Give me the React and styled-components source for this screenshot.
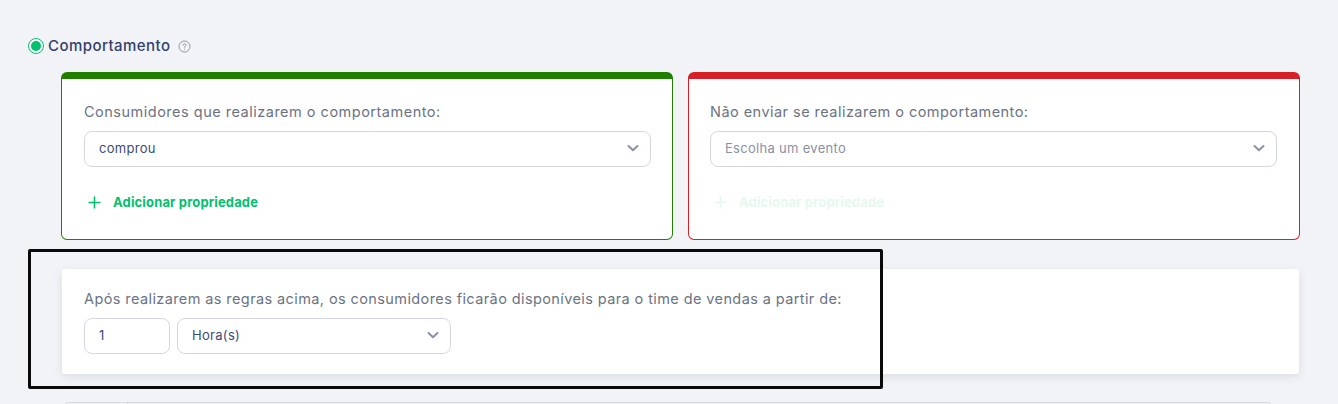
import React from "react";
import styled, { createGlobalStyle } from "styled-components";

const Global = createGlobalStyle`
  html, body { margin: 0; padding: 0; background: #f2f3f7; }
  body { font-family: "Inter", "Liberation Sans", sans-serif; overflow: hidden; }
  * { box-sizing: border-box; }
`;

const Page = styled.div`
  position: relative;
  width: 1338px;
  height: 404px;
  overflow: hidden;
  padding: 38px 38px 0 28px;
  background: #f2f3f7;
`;

const Heading = styled.div`
  display: flex;
  align-items: center;
  height: 16px;
`;

const Radio = styled.span`
  width: 16px;
  height: 16px;
  border-radius: 50%;
  border: 1.5px solid #00c16e;
  background: #fff;
  display: flex;
  align-items: center;
  justify-content: center;
  &::after {
    content: "";
    width: 10px;
    height: 10px;
    border-radius: 50%;
    background: #00c16e;
  }
`;

const Title = styled.span`
  margin-left: 4px;
  font-size: 15px;
  font-weight: 500;
  color: #33416f;
  letter-spacing: 0.45px;
  line-height: 16px;
`;

const Help = styled.svg`
  margin: 1px 0 0 7px;
  width: 13px;
  height: 13px;
`;

const Body = styled.div`
  padding: 18px 0 0 33px;
`;

const Cards = styled.div`
  display: grid;
  grid-template-columns: 612px 612px;
  column-gap: 15px;
`;

const RuleCard = styled.section`
  height: 168px;
  background: #fff;
  border: 1px solid ${(p) => p.$color};
  border-top: 7px solid ${(p) => p.$color};
  border-radius: 6px;
  padding: 23px 0 0 ${(p) => p.$inset}px;
`;

const Label = styled.div`
  font-size: 14.5px;
  line-height: 20px;
  color: #6b7383;
  letter-spacing: ${(p) => p.$spacing};
  margin-bottom: 9px;
`;

const Select = styled.div`
  display: flex;
  align-items: center;
  justify-content: space-between;
  width: ${(p) => p.$width}px;
  height: 36px;
  background: #fff;
  border: 1px solid #d5d7e2;
  border-radius: 8px;
  padding: 0 10px 2px 14px;
  font-size: 13px;
  letter-spacing: 0.3px;
  color: ${(p) => (p.$muted ? "#8b90a4" : "#3d4a78")};
`;

const Chevron = styled.svg`
  width: 14px;
  height: 9px;
  flex: none;
`;

const AddButton = styled.div`
  display: flex;
  align-items: center;
  gap: 12px;
  margin: 27px 0 0 4px;
  font-size: 13px;
  font-weight: 700;
  letter-spacing: 0.15px;
  color: #00c16e;
  opacity: ${(p) => (p.$disabled ? 0.1 : 1)};
`;

const PlusIcon = styled.svg`
  width: 13px;
  height: 13px;
`;

const DelayCard = styled.section`
  width: 1237px;
  height: 105px;
  margin: 29px 0 0 1px;
  background: #fff;
  border-radius: 3px;
  box-shadow: 0 3px 10px rgba(60, 70, 100, 0.12);
  padding: 20px 22px 0;
`;

const DelayRow = styled.div`
  display: flex;
  gap: 7px;
`;

const NumberBox = styled.div`
  width: 86px;
  height: 36px;
  display: flex;
  align-items: center;
  padding: 0 0 2px 14px;
  border: 1px solid #d5d7e2;
  border-radius: 8px;
  font-size: 13px;
  color: #3d4a78;
`;

const NextCard = styled.div`
  width: 1210px;
  height: 30px;
  margin: 28px 0 0 2px;
  background: #f2f3f7;
  border: 1px solid #d5d7e2;
  border-radius: 6px;
  display: grid;
  grid-template-columns: 64px 1fr;
  &::before {
    content: "";
    border-right: 1px solid #d5d7e2;
  }
`;

const Annotation = styled.div`
  position: absolute;
  left: 28px;
  top: 249px;
  width: 855px;
  height: 140px;
  border: 3px solid #0a0a0a;
  border-radius: 2px;
  pointer-events: none;
`;

const ChevronDown = () => (
  <Chevron viewBox="0 0 14 9" fill="none">
    <path d="M2.5 2l4.5 4.2L11.500 2" stroke="#8a90a6" strokeWidth="2" strokeLinecap="round" strokeLinejoin="round" />
  </Chevron>
);

const Plus = () => (
  <PlusIcon viewBox="0 0 13 13" fill="none">
    <path d="M6.5 0.500v12M0.500 6.500h12" stroke="#00c16e" strokeWidth="1.600" />
  </PlusIcon>
);

export default function App() {
  return (
    <Page>
      <Global />
      <Heading>
        <Radio />
        <Title>Comportamento</Title>
        <Help viewBox="0 0 13 13" fill="none">
          <circle cx="6.500" cy="6.500" r="5.500" stroke="#8f94a8" strokeWidth="1" />
          <path d="M5 5.200c0-.9.7-1.400 1.500-1.400S8 4.300 8 5.100c0 1.100-1.500 1.100-1.500 2.200" stroke="#8f94a8" strokeWidth="1" strokeLinecap="round" />
          <circle cx="6.500" cy="9.100" r=".6" fill="#8f94a8" />
        </Help>
      </Heading>
      <Body>
        <Cards>
          <RuleCard $color="#218000" $inset={22}>
            <Label $spacing="0.5px">Consumidores que realizarem o comportamento:</Label>
            <Select $width={567}>
              comprou
              <ChevronDown />
            </Select>
            <AddButton>
              <Plus />
              Adicionar propriedade
            </AddButton>
          </RuleCard>
          <RuleCard $color="#d61f26" $inset={21}>
            <Label $spacing="0.46px">Não enviar se realizarem o comportamento:</Label>
            <Select $width={567} $muted>
              Escolha um evento
              <ChevronDown />
            </Select>
            <AddButton $disabled>
              <Plus />
              Adicionar propriedade
            </AddButton>
          </RuleCard>
        </Cards>
        <DelayCard>
          <Label $spacing="0.4px">Após realizarem as regras acima, os consumidores ficarão disponíveis para o time de vendas a partir de:</Label>
          <DelayRow>
            <NumberBox>1</NumberBox>
            <Select $width={274}>
              Hora(s)
              <ChevronDown />
            </Select>
          </DelayRow>
        </DelayCard>
        <NextCard />
      </Body>
      <Annotation />
    </Page>
  );
}
